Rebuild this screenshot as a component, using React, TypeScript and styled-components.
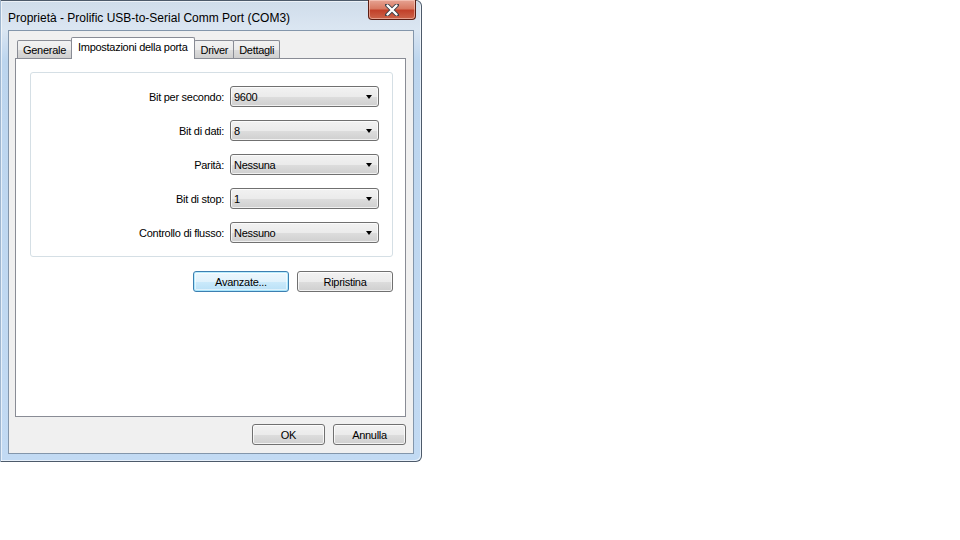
import React from "react";
import styled, { createGlobalStyle, css } from "styled-components";

const Global = createGlobalStyle`
  html, body { margin: 0; padding: 0; background: #ffffff; }
  body { font-family: "Liberation Sans", Arial, sans-serif; font-size: 11px; color: #000; letter-spacing: -0.28px; }
  * { box-sizing: border-box; }
`;

const Page = styled.div`
  width: 960px;
  height: 540px;
  position: relative;
  background: #ffffff;
`;

const Window = styled.div`
  width: 422px;
  height: 462px;
  display: flex;
  flex-direction: column;
  border: 1px solid #4d5a6a;
  border-left-color: #9fb6cf;
  border-radius: 0 6px 6px 0;
  background: linear-gradient(180deg, #cfdcea 0px, #dbe6f2 28px, #bcd5ee 60px, #c2daf3 100%);
  padding: 0 7px 7px 7px;
  box-shadow: inset 1px 1px 0 rgba(255,255,255,0.6), inset -1px -1px 0 rgba(255,255,255,0.6);
`;

const TitleBar = styled.div`
  height: 29px;
  display: flex;
  align-items: flex-start;
  justify-content: space-between;
  position: relative;
`;

const Title = styled.div`
  font-family: "Liberation Sans", Arial, sans-serif;
  font-size: 12px;
  letter-spacing: 0;
  color: #000;
  margin-top: 10px;
`;

const CloseButton = styled.div`
  width: 48px;
  height: 20px;
  margin-right: -2px;
  margin-top: -1px;
  border: 1px solid #5b1d12;
  border-top: none;
  border-radius: 0 0 4px 4px;
  background: linear-gradient(180deg, #e6a393 0%, #d87a63 45%, #c2412a 55%, #cc644a 100%);
  display: flex;
  align-items: center;
  justify-content: center;
  box-shadow: inset 0 0 0 1px rgba(255,220,210,0.5);
`;

const Client = styled.div`
  flex: 1;
  background: #f0f0f0;
  border: 1px solid #8396ab;
  display: flex;
  flex-direction: column;
  padding: 6px 7px 8px 6px;
`;

const TabStrip = styled.div`
  display: flex;
  align-items: flex-end;
  height: 21px;
  padding-left: 2px;
  position: relative;
  z-index: 1;
`;

const Tab = styled.div<{ $active?: boolean }>`
  height: 18px;
  padding: 0 5px;
  border: 1px solid #898c95;
  border-bottom: none;
  border-radius: 2px 2px 0 0;
  background: linear-gradient(180deg, #f2f2f2 0%, #ebebeb 50%, #dddddd 51%, #cfcfcf 100%);
  display: flex;
  align-items: center;
  margin-right: -1px;
  white-space: nowrap;
  ${(p) =>
    p.$active &&
    css`
      background: #ffffff;
      margin-bottom: -1px;
      height: 22px;
      padding: 0 7px 4px 6px;
      position: relative;
      z-index: 2;
    `}
`;

const Panel = styled.div`
  flex: 1;
  background: #ffffff;
  border: 1px solid #898c95;
  padding: 13px 12px 0 14px;
  display: flex;
  flex-direction: column;
`;

const GroupBox = styled.div`
  border: 1px solid #d5dfe5;
  border-radius: 3px;
  padding: 13px 13px 13px 0;
  display: grid;
  grid-template-columns: 1fr 149px;
  column-gap: 6px;
  row-gap: 13px;
  align-items: center;
`;

const Label = styled.div`
  text-align: right;
`;

const Combo = styled.div`
  height: 21px;
  border: 1px solid #707070;
  border-radius: 3px;
  background: linear-gradient(180deg, #f2f2f2 0%, #ebebeb 50%, #dddddd 51%, #cfcfcf 100%);
  display: flex;
  align-items: center;
  justify-content: space-between;
  padding: 0 6px 0 3px;
  box-shadow: inset 0 0 0 1px rgba(255,255,255,0.7);
`;

const Arrow = styled.span`
  width: 0;
  height: 0;
  border-left: 3.5px solid transparent;
  border-right: 3.5px solid transparent;
  border-top: 4px solid #000;
`;

const ButtonRow = styled.div<{ $top: number; $gap: number }>`
  display: flex;
  justify-content: flex-end;
  gap: ${(p) => p.$gap}px;
  margin-top: ${(p) => p.$top}px;
`;

const Button = styled.div<{ $w: number; $focused?: boolean }>`
  width: ${(p) => p.$w}px;
  height: 21px;
  border: 1px solid #707070;
  border-radius: 3px;
  background: linear-gradient(180deg, #f2f2f2 0%, #ebebeb 50%, #dddddd 51%, #cfcfcf 100%);
  box-shadow: inset 0 0 0 1px rgba(255,255,255,0.75);
  display: flex;
  align-items: center;
  justify-content: center;
  ${(p) =>
    p.$focused &&
    css`
      border-color: #3c7fb1;
      background: linear-gradient(180deg, #edf7fd 0%, #e0f2fc 50%, #cbeafb 51%, #b9e0f6 100%);
      box-shadow: inset 0 0 0 1px rgba(72, 209, 253, 0.35), inset 0 0 0 2px rgba(255,255,255,0.5);
    `}
`;

const fields = [
  { label: "Bit per secondo:", value: "9600" },
  { label: "Bit di dati:", value: "8" },
  { label: "Parità:", value: "Nessuna" },
  { label: "Bit di stop:", value: "1" },
  { label: "Controllo di flusso:", value: "Nessuno" },
];

export default function App() {
  return (
    <Page>
      <Global />
      <Window>
        <TitleBar>
          <Title>Proprietà - Prolific USB-to-Serial Comm Port (COM3)</Title>
          <CloseButton>
            <svg width="14" height="12" viewBox="0 0 14 12">
              <path
                d="M2 1 L12 11 M12 1 L2 11"
                stroke="#3a3f48"
                strokeWidth="4"
                strokeLinecap="round"
                fill="none"
              />
              <path
                d="M2.5 1.5 L11.5 10.5 M11.5 1.5 L2.5 10.5"
                stroke="#ffffff"
                strokeWidth="2.4"
                strokeLinecap="round"
                fill="none"
              />
            </svg>
          </CloseButton>
        </TitleBar>
        <Client>
          <TabStrip>
            <Tab>Generale</Tab>
            <Tab $active>Impostazioni della porta</Tab>
            <Tab>Driver</Tab>
            <Tab>Dettagli</Tab>
          </TabStrip>
          <Panel>
            <GroupBox>
              {fields.map((f) => (
                <React.Fragment key={f.label}>
                  <Label>{f.label}</Label>
                  <Combo>
                    <span>{f.value}</span>
                    <Arrow />
                  </Combo>
                </React.Fragment>
              ))}
            </GroupBox>
            <ButtonRow $top={14} $gap={8}>
              <Button $w={96} $focused>Avanzate...</Button>
              <Button $w={96}>Ripristina</Button>
            </ButtonRow>
          </Panel>
          <ButtonRow $top={7} $gap={8}>
            <Button $w={73}>OK</Button>
            <Button $w={73}>Annulla</Button>
          </ButtonRow>
        </Client>
      </Window>
    </Page>
  );
}
